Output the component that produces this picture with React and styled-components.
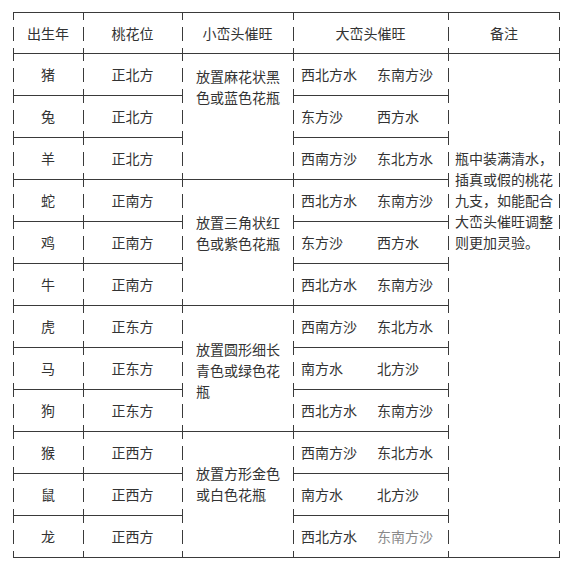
import React from "react";
import styled, { createGlobalStyle } from "styled-components";

const rows = [
  { year: "猪", peach: "正北方", pair: ["西北方水", "东南方沙"] },
  { year: "兔", peach: "正北方", pair: ["东方沙", "西方水"] },
  { year: "羊", peach: "正北方", pair: ["西南方沙", "东北方水"] },
  { year: "蛇", peach: "正南方", pair: ["西北方水", "东南方沙"] },
  { year: "鸡", peach: "正南方", pair: ["东方沙", "西方水"] },
  { year: "牛", peach: "正南方", pair: ["西北方水", "东南方沙"] },
  { year: "虎", peach: "正东方", pair: ["西南方沙", "东北方水"] },
  { year: "马", peach: "正东方", pair: ["南方水", "北方沙"] },
  { year: "狗", peach: "正东方", pair: ["西北方水", "东南方沙"] },
  { year: "猴", peach: "正西方", pair: ["西南方沙", "东北方水"] },
  { year: "鼠", peach: "正西方", pair: ["南方水", "北方沙"] },
  { year: "龙", peach: "正西方", pair: ["西北方水", "东南方沙"] },
];

const vases = [
  { text: "放置麻花状黑色或蓝色花瓶", top: 12 },
  { text: "放置三角状红色或紫色花瓶", top: 32 },
  { text: "放置圆形细长青色或绿色花瓶", top: 33 },
  { text: "放置方形金色或白色花瓶", top: 31 },
];

const note = "瓶中装满清水，插真或假的桃花九支，如能配合大峦头催旺调整则更加灵验。";

export default function App() {
  return (
    <>
      <GlobalStyle />
      <Page>
        <Table>
          <Head>出生年</Head>
          <Head>桃花位</Head>
          <Head>小峦头催旺</Head>
          <Head>大峦头催旺</Head>
          <Head $last>备注</Head>
          {rows.map((row, i) => (
            <React.Fragment key={i}>
              <Center>{row.year}</Center>
              <Center>{row.peach}</Center>
              {i % 3 === 0 && (
                <Vase $top={vases[i / 3].top}>{vases[i / 3].text}</Vase>
              )}
              <Pair>
                <span>{row.pair[0]}</span>
                <Faint $faint={i === rows.length - 1}>{row.pair[1]}</Faint>
              </Pair>
              {i === 0 && <Note $last>{note}</Note>}
            </React.Fragment>
          ))}
        </Table>
      </Page>
    </>
  );
}

const GlobalStyle = createGlobalStyle`
  body {
    margin: 0;
    background: #fff;
    font-family: "Noto Sans CJK SC", "Noto Sans", sans-serif;
    color: #333;
  }
`;

const Page = styled.div`
  padding: 12px 0 0 13px;
`;

const Table = styled.div`
  display: grid;
  grid-template-columns: 70px 99px 111px 155px 112px;
  grid-template-rows: 41px repeat(12, 42px);
  width: max-content;
  border-top: 1px solid #3a3a3a;
`;

const dash =
  "repeating-linear-gradient(to bottom, #3a3a3a 0 7px, transparent 7px 14px, #3a3a3a 14px 21px)";

const Cell = styled.div`
  box-sizing: border-box;
  border-bottom: 1px solid #3a3a3a;
  font-size: 14px;
  line-height: 21px;
  background-image: ${(p) => (p.$last ? `${dash}, ${dash}` : dash)};
  background-size: 1px 100%;
  background-repeat: no-repeat;
  background-position: ${(p) => (p.$last ? "left top, right top" : "left top")};
`;

const Head = styled(Cell)`
  display: flex;
  align-items: center;
  justify-content: center;
`;

const Center = styled(Cell)`
  display: flex;
  align-items: center;
  justify-content: center;
`;

const Vase = styled(Cell)`
  grid-row: span 3;
  padding: ${(p) => p.$top}px 13px 0 14px;
`;

const Pair = styled(Cell)`
  display: grid;
  grid-template-columns: 76px auto;
  align-items: center;
  padding-left: 8px;
`;

const Faint = styled.span`
  color: ${(p) => (p.$faint ? "#8a8a8a" : "inherit")};
`;

const Note = styled(Cell)`
  grid-row: span 12;
  padding: 94px 6px 0 7px;
`;
